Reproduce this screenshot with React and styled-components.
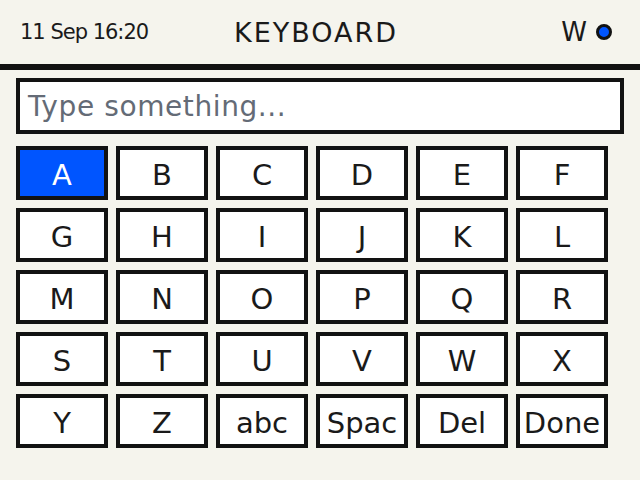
import React from "react";
import styled, { createGlobalStyle } from "styled-components";

const Global = createGlobalStyle`
  html, body { margin: 0; padding: 0; background: #f5f4ed; }
  body { font-family: "DejaVu Sans", sans-serif; color: #161616; }
`;

const Screen = styled.div`
  width: 640px;
  height: 480px;
  background: #f5f4ed;
  display: flex;
  flex-direction: column;
`;

const Header = styled.header`
  height: 64px;
  display: grid;
  grid-template-columns: 1fr auto 1fr;
  align-items: center;
  padding: 0 28px 0 20px;
  border-bottom: 6px solid #121212;
`;

const DateText = styled.span`
  font-size: 21px;
  letter-spacing: -1px;
  justify-self: start;
  color: #1a1a1a;
`;

const Title = styled.span`
  font-size: 27px;
  letter-spacing: 2px;
  color: #1a1a1a;
`;

const Status = styled.div`
  justify-self: end;
  display: flex;
  align-items: center;
  gap: 9px;
  font-size: 26px;
  color: #1a1a1a;
`;

const Dot = styled.span`
  width: 10px;
  height: 10px;
  border-radius: 50%;
  background: #0055ff;
  border: 3px solid #121212;
`;

const Body = styled.main`
  padding: 8px 16px 0 16px;
  display: flex;
  flex-direction: column;
  gap: 12px;
`;

const Input = styled.div`
  height: 48px;
  border: 4px solid #121212;
  background: #ffffff;
  display: flex;
  align-items: center;
  padding: 0 8px;
  font-size: 28px;
  letter-spacing: 0.6px;
  color: #646b76;
`;

const Grid = styled.div`
  display: grid;
  grid-template-columns: repeat(6, 92px);
  grid-auto-rows: 54px;
  gap: 8px;
`;

const Key = styled.div`
  box-sizing: border-box;
  border: 4px solid #121212;
  background: ${(p) => (p.$active ? "#0055ff" : "#ffffff")};
  color: ${(p) => (p.$active ? "#ffffff" : "#1a1a1a")};
  display: flex;
  align-items: center;
  justify-content: center;
  padding-top: 4px;
  font-size: 29px;
  white-space: nowrap;
  overflow: hidden;
`;

const keys = [
  "A","B","C","D","E","F",
  "G","H","I","J","K","L",
  "M","N","O","P","Q","R",
  "S","T","U","V","W","X",
  "Y","Z","abc","Spac","Del","Done",
];

export default function App() {
  return (
    <Screen>
      <Global />
      <Header>
        <DateText>11 Sep 16:20</DateText>
        <Title>KEYBOARD</Title>
        <Status>
          W<Dot />
        </Status>
      </Header>
      <Body>
        <Input>Type something...</Input>
        <Grid>
          {keys.map((k, i) => (
            <Key key={k} $active={i === 0}>{k}</Key>
          ))}
        </Grid>
      </Body>
    </Screen>
  );
}
